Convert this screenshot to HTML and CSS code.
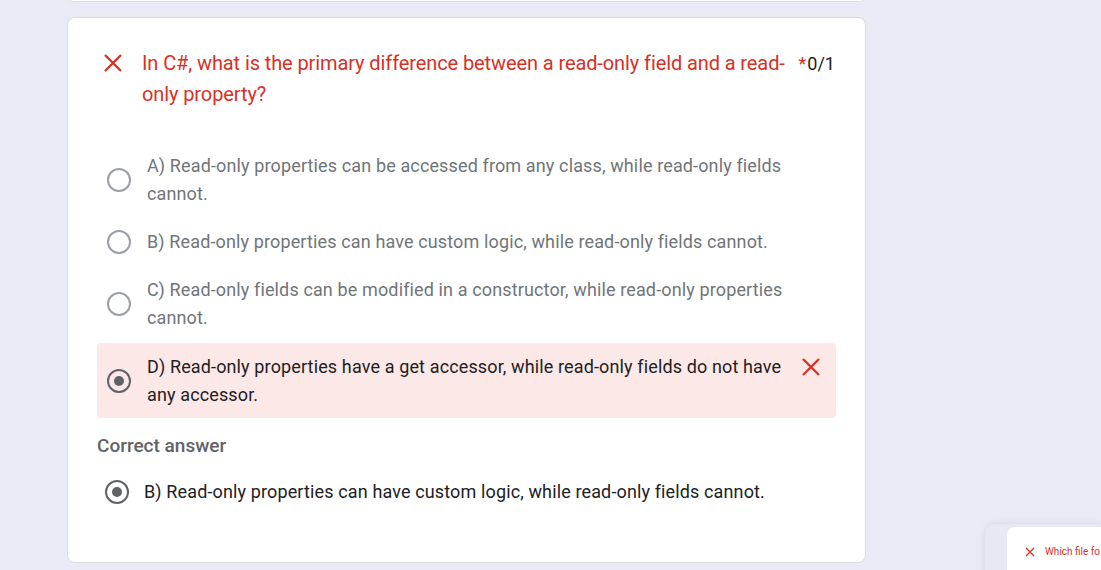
FILE: index.html
```html
<!DOCTYPE html>
<html>
<head>
<meta charset="utf-8">
<link rel="stylesheet" href="styles.css">
</head>
<body>
<div class="page">
  <div class="card card-prev"></div>
  <div class="card">
    <div class="title-row">
      <span class="x-icon big">
        <svg viewBox="0 0 20 20" width="20" height="20"><path d="M2 2 18 18M18 2 2 18" stroke="#d93025" stroke-width="2.3" fill="none"/></svg>
      </span>
      <div class="title">In C#, what is the primary difference between a read-only field and a read-only property?</div>
      <div class="score"><span class="req">*</span>0/1</div>
    </div>
    <div class="options">
      <div class="opt">
        <span class="radio"></span>
        <span class="opt-text">A) Read-only properties can be accessed from any class, while read-only fields cannot.</span>
      </div>
      <div class="opt">
        <span class="radio"></span>
        <span class="opt-text">B) Read-only properties can have custom logic, while read-only fields cannot.</span>
      </div>
      <div class="opt">
        <span class="radio"></span>
        <span class="opt-text">C) Read-only fields can be modified in a constructor, while read-only properties cannot.</span>
      </div>
      <div class="opt opt-wrong">
        <span class="radio checked"></span>
        <span class="opt-text">D) Read-only properties have a get accessor, while read-only fields do not have any accessor.</span>
        <span class="x-icon">
          <svg viewBox="0 0 20 20" width="20" height="20"><path d="M2 2 18 18M18 2 2 18" stroke="#d93025" stroke-width="2.3" fill="none"/></svg>
        </span>
      </div>
    </div>
    <div class="correct-label">Correct answer</div>
    <div class="opt opt-correct">
      <span class="radio checked"></span>
      <span class="opt-text">B) Read-only properties can have custom logic, while read-only fields cannot.</span>
    </div>
  </div>
</div>
<div class="peek">
  <div class="peek-card">
    <svg viewBox="0 0 10 10" width="10" height="10"><path d="M1 1 9 9M9 1 1 9" stroke="#d93025" stroke-width="1.3" fill="none"/></svg>
    <span>Which file fo</span>
  </div>
</div>
</body>
</html>
```
FILE: styles.css
```css
html, body {
  margin: 0;
  padding: 0;
  background: #e8ebf6;
  height: 100%;
  overflow: hidden;
}
body {
  font-family: Roboto, "Liberation Sans", Arial, sans-serif;
  position: relative;
}
.page {
  width: 799px;
  margin-left: 67px;
  display: flex;
  flex-direction: column;
  gap: 15px;
}
.card {
  background: #fff;
  border: 1px solid #dadce0;
  border-radius: 8px;
  padding: 30px 29px 56px 29px;
}
.card-prev {
  margin-top: -10px;
  height: 10px;
  padding: 0;
}
.title-row {
  display: flex;
  align-items: flex-start;
}
.x-icon {
  flex: none;
  display: flex;
}
.x-icon.big {
  margin: 5px 19px 0 6px;
}
.title {
  flex: 1;
  color: #d93025;
  font-size: 20px;
  line-height: 31px;
  padding-right: 6px;
  letter-spacing: -0.1px;
}
.score {
  font-size: 18px;
  line-height: 31px;
  color: #202124;
  white-space: nowrap;
  margin-right: 1px;
}
.req {
  color: #d93025;
  margin-right: 1px;
}
.options {
  margin-top: 32px;
  display: flex;
  flex-direction: column;
}
.opt {
  display: flex;
  align-items: center;
  padding: 10px 10px;
  border-radius: 4px;
}
.radio {
  width: 20px;
  height: 20px;
  border: 2px solid #9aa0a6;
  border-radius: 50%;
  flex: none;
  margin-right: 16px;
  position: relative;
  box-sizing: content-box;
}
.radio.checked {
  border-color: #5f6368;
}
.radio.checked::after {
  content: "";
  position: absolute;
  left: 5px;
  top: 5px;
  width: 10px;
  height: 10px;
  border-radius: 50%;
  background: #5f6368;
}
.opt-text {
  flex: 1;
  font-size: 18px;
  line-height: 28px;
  color: #70757a;
  letter-spacing: 0.13px;
}
.opt-wrong {
  margin-top: 1px;
  padding-bottom: 9px;
  background: #fce8e6;
}
.opt-wrong .opt-text {
  color: #202124;
}
.opt-wrong .x-icon {
  margin-left: 14px;
  align-self: flex-start;
  margin-top: 4px;
  margin-right: 5px;
}
.correct-label {
  margin-top: 15px;
  font-size: 19px;
  line-height: 26px;
  color: #5f6368;
  font-weight: 500;
}
.opt-correct {
  margin-top: 19px;
  padding: 0 8px;
}
.opt-correct .radio {
  margin-right: 15px;
}
.opt-correct .opt-text {
  color: #202124;
}
.peek {
  position: absolute;
  left: 985px;
  top: 524px;
  width: 116px;
  height: 60px;
  background: #e6e9f4;
  border-radius: 10px 0 0 0;
  box-shadow: 0 0 6px rgba(60, 64, 67, 0.12);
  padding: 3px 0 0 22px;
  box-sizing: border-box;
}
.peek-card {
  background: #fff;
  border-radius: 8px 0 0 0;
  height: 60px;
  display: flex;
  align-items: center;
  gap: 10px;
  padding: 0 0 10px 18px;
  box-sizing: border-box;
  color: #d93025;
  font-size: 10px;
  line-height: 12px;
  white-space: nowrap;
  overflow: hidden;
}
```
